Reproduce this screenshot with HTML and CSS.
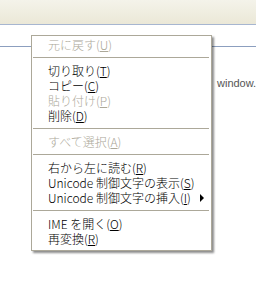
FILE: index.html
```html
<!DOCTYPE html>
<html>
<head>
    <meta charset="UTF-8">
    <title>Context Menu</title>
    <link rel="stylesheet" href="styles.css">
</head>
<body>
    <div class="toolbar"></div>

    <div class="page">
        <div class="editor">
            <span class="code">window.</span>
        </div>
    </div>

    <ul class="menu">
        <li class="item disabled">元に戻す(<u>U</u>)</li>
        <li class="sep"></li>
        <li class="item">切り取り(<u>T</u>)</li>
        <li class="item">コピー(<u>C</u>)</li>
        <li class="item disabled">貼り付け(<u>P</u>)</li>
        <li class="item">削除(<u>D</u>)</li>
        <li class="sep"></li>
        <li class="item disabled">すべて選択(<u>A</u>)</li>
        <li class="sep"></li>
        <li class="item">右から左に読む(<u>R</u>)</li>
        <li class="item">Unicode 制御文字の表示(<u>S</u>)</li>
        <li class="item sub">Unicode 制御文字の挿入(<u>I</u>)<span class="arrow"></span></li>
        <li class="sep"></li>
        <li class="item">IME を開く(<u>O</u>)</li>
        <li class="item">再変換(<u>R</u>)</li>
    </ul>
</body>
</html>
```

FILE: styles.css
```css
html, body {
    margin: 0;
    padding: 0;
    background: #ffffff;
    overflow: hidden;
}
body {
    height: 300px;
}
.toolbar {
    height: 24px;
    background: linear-gradient(#f4f3ea, #ebe8d7);
    border-bottom: 1px solid #a7b6d0;
}
.page {
    padding-top: 21px;
}
.editor {
    border-top: 1px solid #8c9fbf;
    height: 200px;
    white-space: nowrap;
}
.code {
    display: block;
    margin: 30px 0 0 217px;
    font-family: "Liberation Sans", Arial, sans-serif;
    font-size: 11px;
    color: #555555;
}

/* popup menu */
.menu {
    position: absolute;
    left: 31px;
    top: 35px;
    width: 179px;
    margin: 0;
    padding: 1px 0 4px;
    list-style: none;
    background: #ffffff;
    border: 1px solid #aca899;
    box-shadow: 2px 2px 2px rgba(0, 0, 0, 0.45);
    font-family: "Noto Sans CJK JP", sans-serif;
    font-size: 12px;
    font-weight: 300;
    color: #000000;
}
.item {
    display: flex;
    align-items: center;
    height: 15px;
    line-height: 15px;
    padding-left: 16px;
    white-space: nowrap;
}
.item u {
    text-underline-offset: 1px;
}
.disabled {
    color: #aca899;
}
.sep {
    height: 1px;
    margin: 5px 2px 5px 1px;
    background: #aca899;
}
.arrow {
    margin-left: auto;
    margin-right: 7px;
    width: 0;
    height: 0;
    border-left: 4px solid #000000;
    border-top: 4px solid transparent;
    border-bottom: 4px solid transparent;
}
```
